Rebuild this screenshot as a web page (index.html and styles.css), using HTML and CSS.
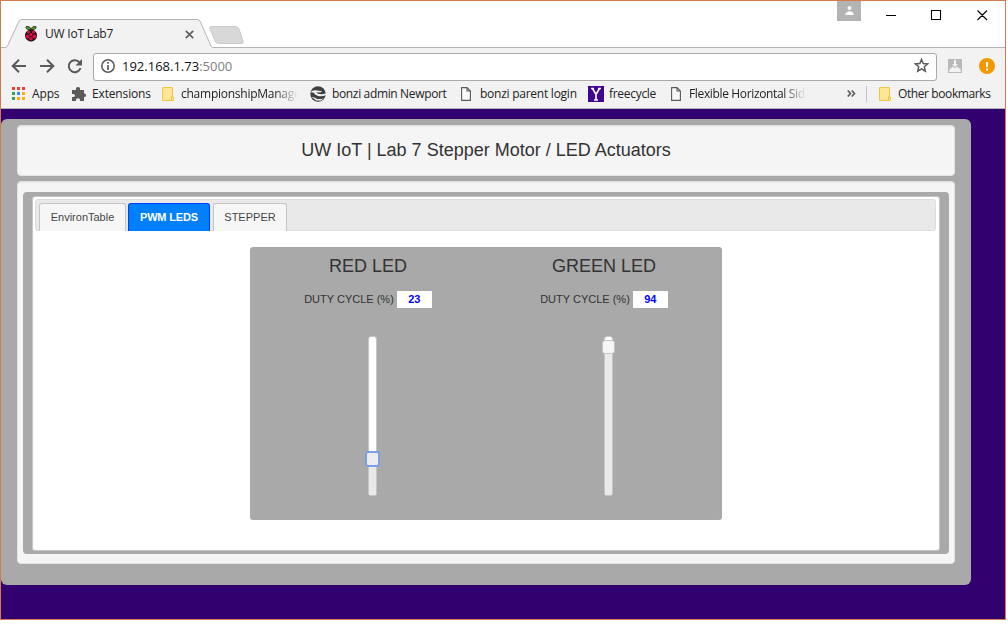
FILE: index.html
```html
<!DOCTYPE html>
<html lang="en">
<head>
<meta charset="utf-8">
<title>UW IoT Lab7</title>
<link rel="stylesheet" href="styles.css">
</head>
<body>
<div class="window">
  <header class="titlebar">
    <div class="tab">
      <svg class="tab-shape" width="212" height="29" viewBox="0 0 212 29"><path d="M0 28.500H5L6.500 27L18 2Q19 .5 21 .5H196Q198 .5 199 2L210 27L211.500 28.500V29H0Z" fill="#f2f2f2"/><path d="M0 28.500H5L6.500 27L18 2Q19 .5 21 .5H196Q198 .5 199 2L210 27L211.500 28.500" fill="none" stroke="#b4b4b4"/></svg>
      <div class="tab-content">
        <svg width="14" height="16" viewBox="0 0 14 16"><path d="M7 4Q3 4 2 2Q1 0 4 .5Q6 .5 7 3Q8 .5 10 .5Q13 0 12 2Q11 4 7 4Z" fill="#55a51c" stroke="#222" stroke-width=".8"/><path d="M7 3.500C10 3.500 13 6 13 9.500C13 13 10 15.500 7 15.500C4 15.500 1 13 1 9.500C1 6 4 3.500 7 3.500Z" fill="#281018"/><g fill="#d61245"><circle cx="4.500" cy="6" r="1.600"/><circle cx="9.500" cy="6" r="1.600"/><circle cx="7" cy="8.700" r="1.600"/><circle cx="3.500" cy="10.500" r="1.900"/><circle cx="10.500" cy="10.500" r="1.900"/><circle cx="7" cy="12.800" r="1.800"/></g></svg>
        <span class="tab-title">UW IoT Lab7</span>
        <svg class="tab-close" width="9" height="9" viewBox="0 0 9 9"><path d="M.8 .8L8.200 8.200M8.200 .8L.8 8.200" stroke="#606060" stroke-width="1.700"/></svg>
      </div>
    </div>
    <svg class="newtab" width="36" height="18" viewBox="0 0 36 18"><path d="M3 .5H26Q29 .5 30 3L34 15Q35 17.500 32 17.500H10Q7 17.500 6 15L.8 2.500Q.3 .5 3 .5Z" fill="#d8d8d8" stroke="#cacaca"/></svg>
    <div class="controls">
      <span class="user"><svg width="9" height="9" viewBox="0 0 9 9"><circle cx="4.500" cy="2" r="2" fill="#fff"/><path d="M.5 9V7Q4.500 3.500 8.500 7V9Z" fill="#fff"/></svg></span>
      <svg class="win-icons" width="106" height="12" viewBox="0 0 106 12"><path d="M0 6.500H10M45.500 1.500H54.500V10.500H45.500ZM91.500 1.500L101 11M101 1.500L91.500 11" fill="none" stroke="#000" stroke-width="1.100"/></svg>
    </div>
  </header>
  <div class="toolbar">
    <svg class="nav-icons" width="72" height="16" viewBox="0 0 72 16"><g fill="none" stroke="#5a5a5a" stroke-width="2"><path d="M15 8H2M8 1.700L1.700 8L8 14.300M29 8H42M36 1.700L42.300 8L36 14.300"/><path d="M68.600 4.600A6 6 0 1 0 69.500 10"/></g><path d="M71 1V7.500H64.500Z" fill="#5a5a5a"/></svg>
    <div class="address">
      <svg class="info" width="14" height="14" viewBox="0 0 14 14"><circle cx="7" cy="7" r="6.200" fill="none" stroke="#5a5a5a" stroke-width="1.500"/><path d="M7 3V4.700M7 6V11" stroke="#5a5a5a" stroke-width="1.700"/></svg>
      <span class="url">192.168.1.73<span class="port">:5000</span></span>
      <svg class="star" width="15" height="15" viewBox="0 0 15 15"><path d="M7.500 1.500L9.200 5.500L13.700 5.900L10.300 8.800L11.300 13.200L7.500 10.800L3.700 13.200L4.700 8.800L1.300 5.900L5.800 5.500Z" fill="none" stroke="#5a5a5a" stroke-width="1.500"/></svg>
    </div>
    <svg class="ext" width="14" height="14" viewBox="0 0 14 14"><path d="M0 0H14V14H0Z" fill="#b9b9b9"/><path d="M6 1H8V5H10L7 8L4 5H6ZM1 13Q1 9 4.500 8.500L3.500 7L7 9L10.500 7L9.500 8.500Q13 9 13 13Z" fill="#f2f2f2"/></svg>
    <svg class="alert" width="16" height="16" viewBox="0 0 16 16"><circle cx="8" cy="8" r="8" fill="#f29900"/><path d="M8 4V9M8 10.500V12.500" stroke="#fff" stroke-width="2"/></svg>
  </div>
  <nav class="bookmarks">
    <a class="bm apps"><svg width="13" height="13" viewBox="0 0 13 13"><path d="M0 0h3v3H0zM5 0h3v3H5zM10 0h3v3h-3z" fill="#ea4335"/><path d="M0 5h3v3H0zM0 10h3v3H0z" fill="#34a05a"/><path d="M5 5h3v3H5z" fill="#4285f4"/><path d="M10 5h3v3h-3zM5 10h3v3H5zM10 10h3v3h-3z" fill="#fbaf05"/></svg><span>Apps</span></a>
    <a class="bm extensions"><svg width="14" height="14" viewBox="0 0 14 14"><path d="M0 3H4Q3.500 0 6 0Q8.500 0 8 3H12V6.500Q14 6 14 8.300Q14 10.500 12 10V14H8Q8.300 11.200 6 11.200Q3.700 11.200 4 14H0V10Q3 10.500 3 8.500Q3 6.500 0 7Z" fill="#5a5a5a"/></svg><span>Extensions</span></a>
    <a class="bm champ"><svg width="12" height="14" viewBox="0 0 12 14"><path d="M.5 .5H10.500V10H11.500V13.500H.5Z" fill="#ffe694" stroke="#ecc847"/><path d="M9.500 13V9.500H11" fill="none" stroke="#ecc847"/></svg><span class="fade">championshipManage</span></a>
    <a class="bm admin"><svg width="16" height="16" viewBox="0 0 16 16"><circle cx="8" cy="8" r="7.700" fill="#3f4041"/><path d="M0 6.500Q3 3.500 7 4.500L12 5.200L11 6.200L6 6.500Q8 8.500 12 8.200L16 7.500V9Q12 11 8 10Q5 9 4 7Q2 6 0 6.500ZM1 11Q5 11 7 13L12 13L14 12L11 14.500H6Q4 12 1 11Z" fill="#f2f2f2"/></svg><span>bonzi admin Newport</span></a>
    <a class="bm parent"><svg width="10" height="14" viewBox="0 0 10 14"><path d="M.6 .6H6L9.400 4V13.400H.6ZM6 .6V4H9.400" fill="#fafafa" stroke="#5a5a5a" stroke-width="1.100"/></svg><span>bonzi parent login</span></a>
    <a class="bm free"><span class="y-icon"><svg width="16" height="16" viewBox="0 0 16 16"><path d="M3 2.500H6M10 2.500H13M4.500 2.500L8 8.500L11.500 2.500M8 8V14M6 14H10" fill="none" stroke="#fff" stroke-width="1.600"/></svg></span><span>freecycle</span></a>
    <a class="bm flexible"><svg width="10" height="14" viewBox="0 0 10 14"><path d="M.6 .6H6L9.400 4V13.400H.6ZM6 .6V4H9.400" fill="#fafafa" stroke="#5a5a5a" stroke-width="1.100"/></svg><span class="fade">Flexible Horizontal Sid</span></a>
    <svg class="more" width="9" height="7" viewBox="0 0 9 7"><path d="M.7 .5L3.500 3.500L.7 6.500M4.700 .5L7.500 3.500L4.700 6.500" fill="none" stroke="#5a5a5a" stroke-width="1.600"/></svg>
    <span class="divider"></span>
    <a class="bm other"><svg width="12" height="14" viewBox="0 0 12 14"><path d="M.5 .5H10.500V10H11.500V13.500H.5Z" fill="#ffe694" stroke="#ecc847"/><path d="M9.500 13V9.500H11" fill="none" stroke="#ecc847"/></svg><span>Other bookmarks</span></a>
  </nav>
  <main class="page">
    <div class="container">
      <section class="well title">UW IoT | Lab 7 Stepper Motor / LED Actuators</section>
      <section class="well body">
        <div class="frame">
          <div class="tabs-widget">
            <div class="tabs">
              <a class="t t1">EnvironTable</a><a class="t t2 active">PWM LEDS</a><a class="t t3">STEPPER</a>
            </div>
            <div class="leds">
              <div class="led">
                <h2>RED LED</h2>
                <div class="duty"><span class="duty-label">DUTY CYCLE (%)</span><span class="value">23</span></div>
                <div class="slider"><div class="range" style="height:23%"></div><span class="handle focus" style="bottom:28px"></span></div>
              </div>
              <div class="led">
                <h2>GREEN LED</h2>
                <div class="duty"><span class="duty-label">DUTY CYCLE (%)</span><span class="value">94</span></div>
                <div class="slider"><div class="range" style="height:94%"></div><span class="handle" style="bottom:141px"></span></div>
              </div>
            </div>
          </div>
        </div>
      </section>
    </div>
  </main>
</div>
</body>
</html>
```
FILE: styles.css
```css
* { box-sizing: border-box; }
body { margin: 0; background: #fff; font-family: "Liberation Sans", Arial, sans-serif; }
svg { display: block; flex: none; }
.window { width: 1006px; height: 620px; border: 1px solid #d27b4e; display: flex; flex-direction: column; overflow: hidden; }
.titlebar, .toolbar, .bookmarks { font-family: "Open Sans", "Noto Sans", sans-serif; font-size: 12px; color: #222; white-space: nowrap; }
.titlebar { height: 47px; display: flex; background: linear-gradient(#b4b4b4, #b4b4b4) 0 100% / 100% 1px no-repeat #fff; flex: none; }
.tab { width: 208px; height: 47px; padding-top: 18px; display: grid; grid-template-columns: 212px; }
.tab-shape, .tab-content { grid-area: 1 / 1; }
.tab-content { display: flex; align-items: flex-start; padding: 7px 0 0 23px; }
.tab-title { line-height: 16px; margin-left: 7px; width: 140px; letter-spacing: -.2px; }
.tab-close { margin-top: 4px; }
.newtab { margin-top: 25px; }
.controls { margin-left: auto; display: flex; }
.user { width: 24px; height: 20px; background: #b3b3b3; display: flex; justify-content: center; padding-top: 5px; }
.win-icons { margin: 8px 13px 0 25px; }
.toolbar { height: 33px; display: flex; align-items: center; background: #f2f2f2; padding-top: 4px; flex: none; }
.nav-icons { margin: -2px 0 0 10px; }
.address { width: 844px; height: 28px; margin-left: 10px; border: 1px solid #a9a9a9; border-radius: 3px; background: #fff; display: flex; align-items: center; padding: 0 7px 2px; }
.url { font-size: 13px; margin-left: 7px; color: #111; }
.port { color: #808080; }
.star { margin-left: auto; }
.ext { margin: -2px 0 0 11px; }
.alert { margin: -2px 0 0 17px; }
.bookmarks { height: 28px; display: flex; align-items: center; background: #f2f2f2; border-bottom: 1px solid #b4b4b4; padding-bottom: 2px; flex: none; }
.bm { display: flex; align-items: center; height: 25px; flex: none; }
.bm span { letter-spacing: -.15px; }
.apps { width: 60px; margin-left: 11px; gap: 7px; }
.extensions { width: 90px; gap: 6px; }
.champ { width: 148px; gap: 7px; }
.admin { width: 151px; gap: 6px; }
.bm.admin span { letter-spacing: -.35px; }
.parent { width: 127px; gap: 9px; }
.bm.parent span { letter-spacing: -.25px; }
.free { width: 83px; gap: 5px; }
.bm.free span { letter-spacing: -.3px; }
.flexible { width: 176px; gap: 8px; }
.fade { width: 117px; -webkit-mask-image: linear-gradient(90deg, #000 80%, transparent); mask-image: linear-gradient(90deg, #000 80%, transparent); }
.bm.champ .fade { letter-spacing: -.25px; }
.bm.flexible .fade { letter-spacing: -.35px; }
.y-icon { background: #40068f; }
.divider { width: 1px; height: 16px; background: #c4c4c4; margin-left: 10px; }
.other { margin-left: 12px; gap: 7px; }
.bm.other span { letter-spacing: -.4px; }
.page { flex: 1; background: #330070; padding-top: 10px; }
.container { width: 970px; height: 466px; background: #a9a9a9; border-radius: 6px; padding: 6px 16px 0; }
.well { background: #f5f5f5; border: 1px solid #e3e3e3; border-radius: 4px; box-shadow: inset 0 1px 1px rgba(0,0,0,.05); }
.title { height: 51px; text-align: center; font-size: 18px; line-height: 48px; color: #333; }
.body { height: 383px; margin-top: 5px; padding: 10px 5px 0; }
.frame { height: 362px; background: #a9a9a9; border-radius: 4px; padding: 4px 9px 0; }
.tabs-widget { height: 355px; background: #fff; border: 1px solid #c5c5c5; border-radius: 3px; padding: 2px; }
.tabs { height: 32px; width: 901px; background: #e9e9e9; border: 1px solid #ddd; border-radius: 3px; display: flex; padding: 3px 0 0 3px; font-size: 11px; color: #454545; }
.t { height: 28px; border: 1px solid #c5c5c5; border-bottom: 0; border-radius: 3px 3px 0 0; background: #f6f6f6; line-height: 27px; text-align: center; }
.t1 { width: 87px; margin-right: 2px; }
.t2 { width: 82px; margin-right: 3px; }
.t3 { width: 74px; }
.active { background: #007fff; border-color: #003eff; color: #fff; font-weight: bold; letter-spacing: -.15px; }
.leds { width: 472px; height: 273px; margin: 16px 0 0 215px; background: #a9a9a9; border-radius: 3px; display: grid; grid-template-columns: 1fr 1fr; color: #333; }
.led { text-align: center; }
h2 { margin: 9px 0 0; font-weight: normal; font-size: 18px; line-height: 20px; }
.duty { display: flex; justify-content: center; align-items: center; gap: 3px; height: 17px; margin-top: 15px; font-size: 11px; }
.duty-label { padding-bottom: 1px; }
.value { width: 35px; height: 17px; line-height: 17px; background: #fff; color: #00f; font-weight: bold; }
.slider { position: relative; width: 9px; height: 160px; margin: 28px 0 0 118px; border: 1px solid #c5c5c5; border-radius: 3px; background: #fff; display: flex; align-items: flex-end; }
.range { width: 7px; background: #e9e9e9; border-radius: 0 0 2px 2px; }
.handle { position: absolute; left: -3px; width: 13px; height: 14px; background: #f6f6f6; border: 1px solid #c5c5c5; border-radius: 3px; }
.focus { height: 16px; background: #ededed; border: 2px solid #79a0e6; left: -4px; width: 15px; }
```
